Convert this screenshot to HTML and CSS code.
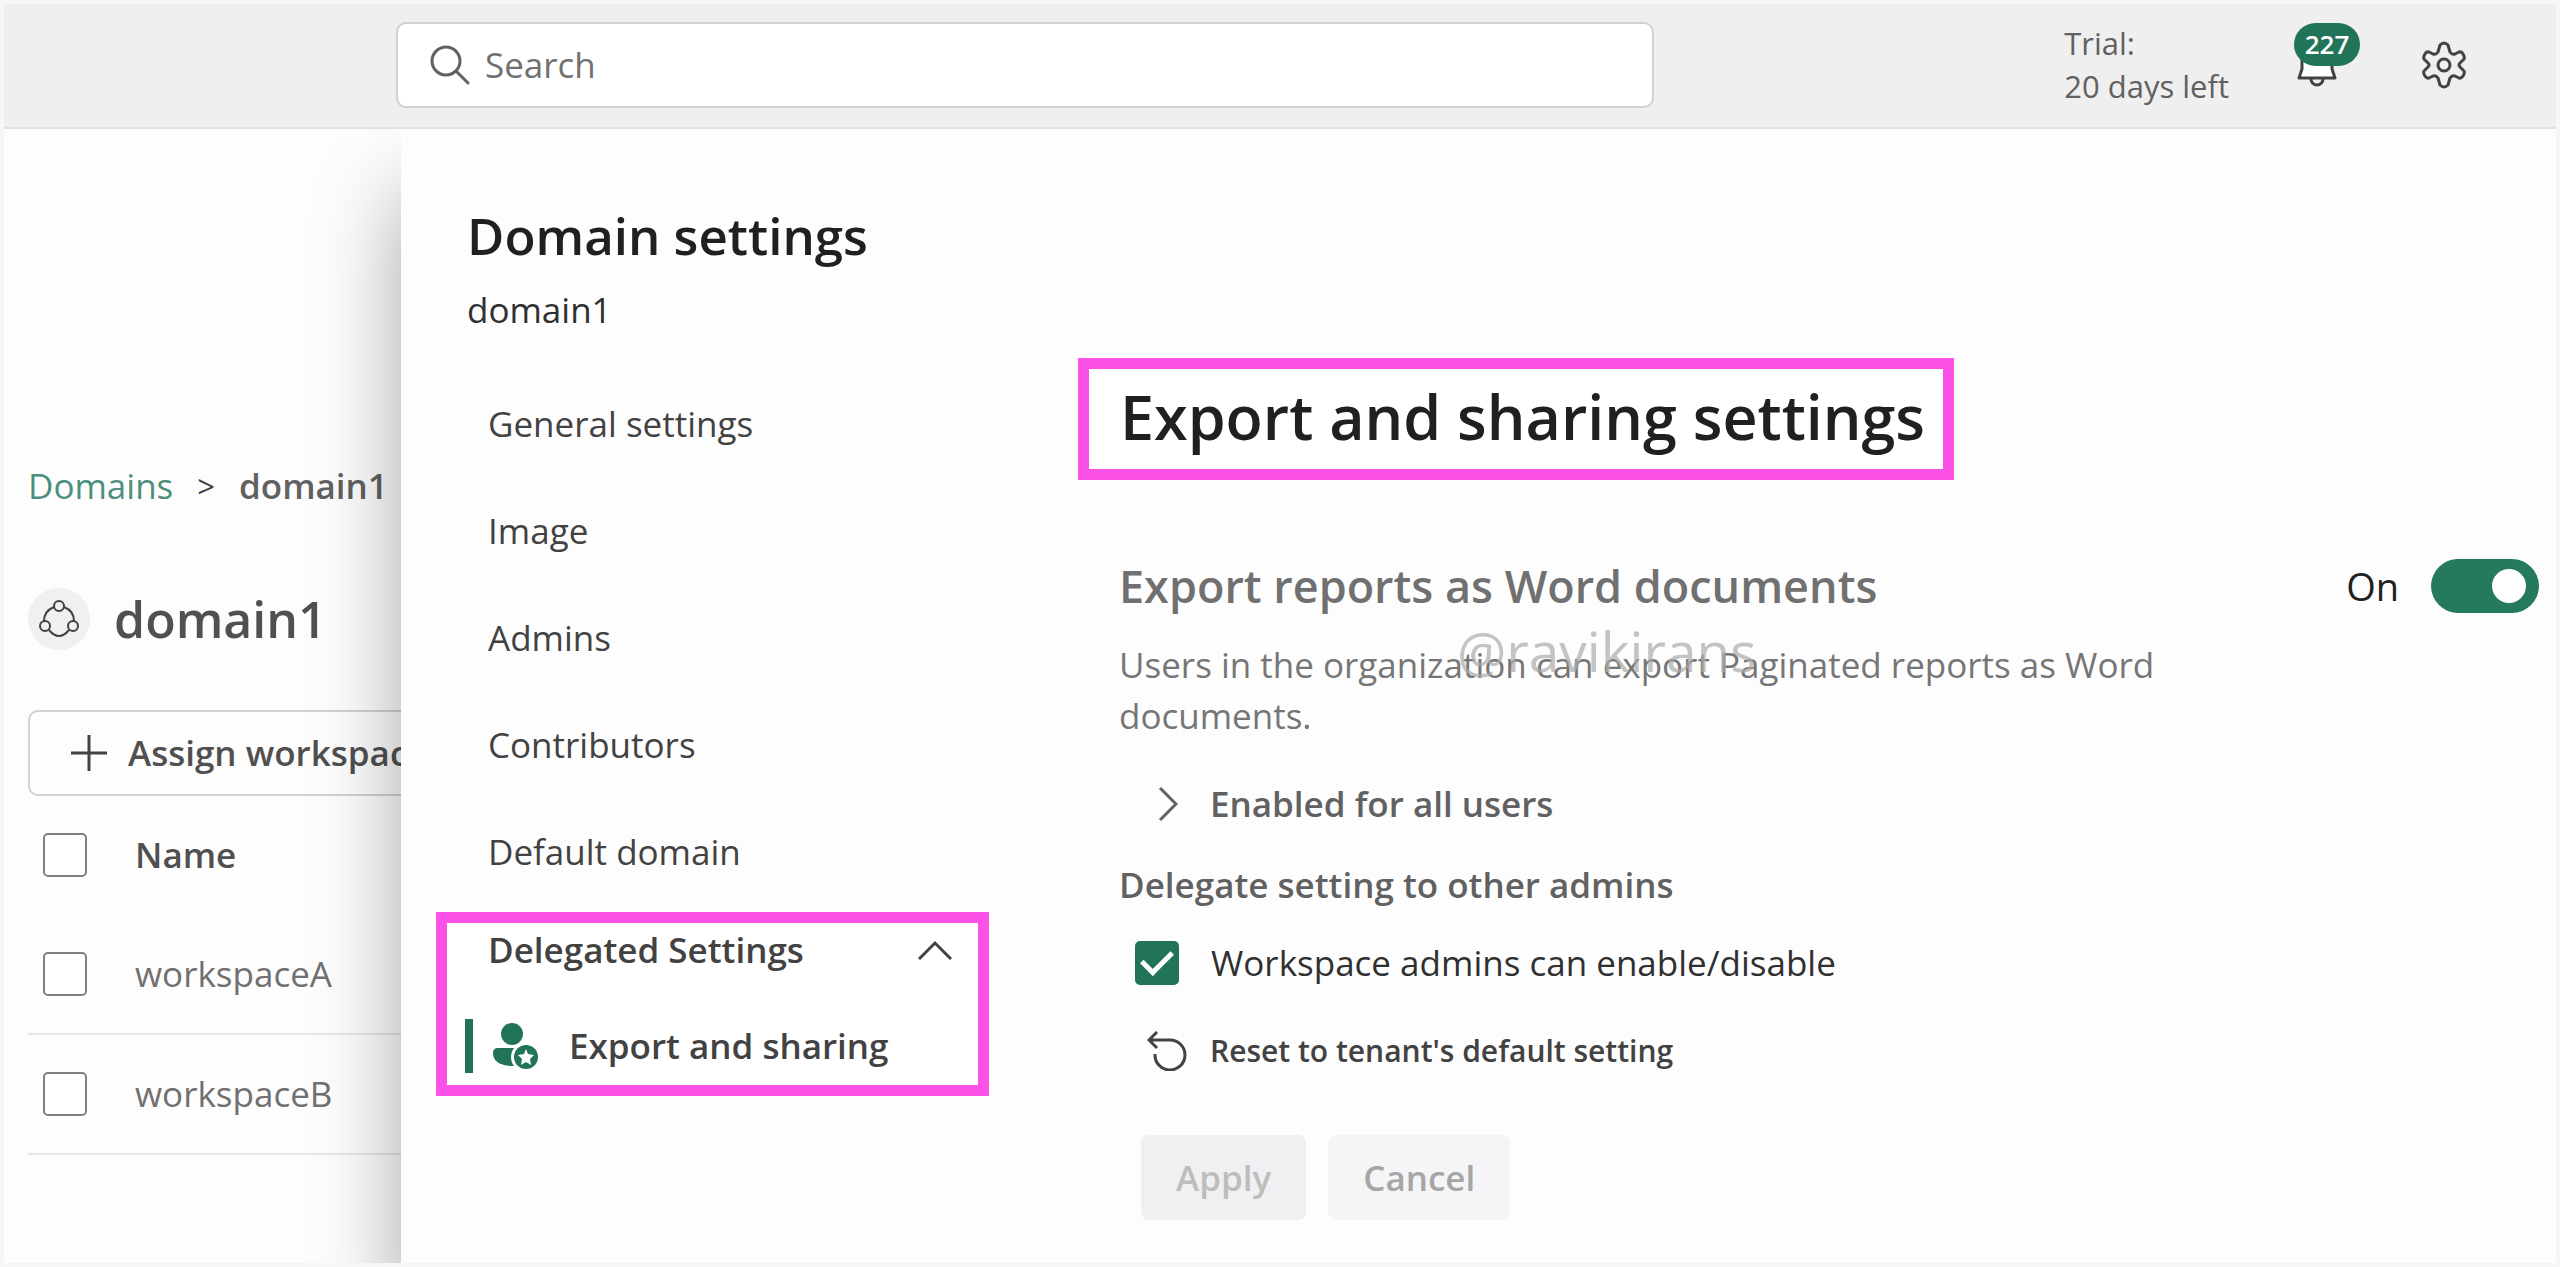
FILE: index.html
```
<!DOCTYPE html>
<html lang="en">
  <head>
    <meta charset="utf-8" />
    <title>Domain settings</title>
    <link rel="stylesheet" href="styles.css">
  </head>
  <body>
    <header class="topbar">
      <label class="search">
        <svg width="40" height="40" viewBox="0 0 40 40" fill="none" stroke="#616161" stroke-width="3" stroke-linecap="round">
          <circle cx="16" cy="16" r="14" />
          <path d="M26 26l12 12" />
        </svg>
        <input type="text" placeholder="Search" aria-label="Search" />
      </label>
      <div class="trial">Trial:<br />20 days left</div>
      <button class="icon-btn bell" aria-label="Notifications">
        <svg width="40" height="44" viewBox="0 0 40 44" fill="none" stroke="#424242" stroke-width="3" stroke-linejoin="round">
          <path class="bell-fill" d="M5 18a15 15 0 0 1 30 0v8l3 9H2l3-9z" />
          <path d="M14 36a6 6 0 0 0 12 0" />
        </svg>
        <span class="badge">227</span>
      </button>
      <button class="icon-btn gear" aria-label="Settings">
        <svg width="46" height="48" viewBox="-1 0 46 48" fill="none" stroke="#424242" stroke-width="3" stroke-linejoin="round">
          <path d="M18 4q4-4 8 0l2 7q2 3 5 2l4-2q3-1 5 4q1 3-1 4l-3 3q-2 2 0 4l3 3q2 1 1 4q-2 5-5 4l-4-2q-3-1-5 2l-2 7q-4 4-8 0l-2-7q-2-3-5-2l-4 2q-3 1-5-4q-1-3 1-4l3-3q2-2 0-4l-3-3q-2-1-1-4q2-5 5-4l4 2q3 1 5-2z" />
          <circle cx="22" cy="24" r="6" />
        </svg>
      </button>
    </header>

    <div class="page">
      <main class="domain">
        <nav class="breadcrumb">
          <a href="#">Domains</a>
          <span class="sep">&gt;</span>
          <b>domain1</b>
        </nav>
        <h1>
          <span class="domain-icon">
            <svg width="40" height="40" viewBox="0 0 40 40" fill="none" stroke="#424242" stroke-width="2">
              <circle cx="20" cy="7" r="5" />
              <circle cx="6" cy="27" r="5" />
              <circle cx="34" cy="27" r="5" />
              <path d="M15 8Q5 12 5 22M25 8q10 4 10 14M10 31q10 12 20 0" />
            </svg>
          </span>
          domain1
        </h1>
        <button class="assign">
          <svg width="38" height="38" viewBox="0 0 38 38" stroke="#424242" stroke-width="3">
            <path d="M19 1v36M1 19h36" />
          </svg>
          Assign workspaces
        </button>
        <table>
          <thead>
            <tr>
              <th><input type="checkbox" class="check" aria-label="Select all" /></th>
              <th>Name</th>
            </tr>
          </thead>
          <tbody>
            <tr>
              <td><input type="checkbox" class="check" id="wsA" /></td>
              <td><label for="wsA">workspaceA</label></td>
            </tr>
            <tr>
              <td><input type="checkbox" class="check" id="wsB" /></td>
              <td><label for="wsB">workspaceB</label></td>
            </tr>
          </tbody>
        </table>
      </main>

      <section class="panel">
        <h2>Domain settings</h2>
        <p class="panel-sub">domain1</p>

        <div class="panel-body">
          <nav class="menu">
            <a href="#">General settings</a>
            <a href="#">Image</a>
            <a href="#">Admins</a>
            <a href="#">Contributors</a>
            <a href="#">Default domain</a>
            <div class="highlight menu-group">
              <button class="group-toggle">
                Delegated Settings
                <svg width="34" height="20" viewBox="0 0 34 20" fill="none" stroke="#424242" stroke-width="3">
                  <path d="M1 19L17 3l16 16" />
                </svg>
              </button>
              <a href="#" class="current">
                <svg width="46" height="46" viewBox="0 0 46 46" fill="#217359">
                  <circle cx="19" cy="11" r="11" />
                  <path d="M5 25h30v18H21Q0 43 0 30q0-5 5-5z" />
                  <circle cx="33" cy="34" r="15" fill="#fff" />
                  <circle cx="33" cy="34" r="12" />
                  <path fill="#fff" d="M33 26l2 5 6 1-4 4 1 6-5-3-5 3 1-6-4-4 6-1z" />
                </svg>
                Export and sharing
              </a>
            </div>
          </nav>

          <div class="content">
            <h3 class="highlight">Export and sharing settings</h3>

            <div class="setting">
              <div class="setting-head">
                <h4>Export reports as Word documents</h4>
                <label for="exportWord">On</label>
                <input type="checkbox" class="switch" id="exportWord" checked />
              </div>
              <div class="desc">
                <p>Users in the organization can export Paginated reports as Word documents.</p>
                <span class="watermark">@ravikirans</span>
              </div>

              <button class="expand">
                <svg width="20" height="34" viewBox="0 0 20 34" fill="none" stroke="#616161" stroke-width="3">
                  <path d="M2 1l16 16L2 33" />
                </svg>
                Enabled for all users
              </button>

              <h5>Delegate setting to other admins</h5>

              <div class="delegate">
                <input type="checkbox" class="check" id="wsAdmins" checked />
                <label for="wsAdmins">Workspace admins can enable/disable</label>
              </div>

              <button class="reset">
                <svg width="40" height="40" viewBox="0 0 40 40" fill="none" stroke="#424242" stroke-width="3">
                  <path d="M10 1L2 9l8 8M2 9h21a15 15 0 1 1-15 14" />
                </svg>
                Reset to tenant's default setting
              </button>

              <div class="actions">
                <button class="apply" disabled>Apply</button>
                <button class="cancel" disabled>Cancel</button>
              </div>
            </div>
          </div>
        </div>
      </section>
    </div>
  </body>
</html>
```
FILE: styles.css
```
* {
  box-sizing: border-box;
}

body {
  margin: 0;
  min-height: 100vh;
  display: flex;
  flex-direction: column;
  border: 4px solid #f6f6f6;
  background: #fefdfe;
  color: #424242;
  font-family: "Open Sans", "Noto Sans", sans-serif;
  font-size: 35px;
  line-height: 48px;
}

h1, h2, h3, h4, h5, p {
  margin: 0;
  font-weight: 600;
}

p {
  font-weight: 400;
}

a {
  color: inherit;
  text-decoration: none;
}

button {
  font: inherit;
  font-weight: 600;
  color: inherit;
  background: none;
  border: 0;
  padding: 0;
}

svg {
  flex: none;
}

/* Top bar */
.topbar {
  display: flex;
  align-items: center;
  height: 125px;
  padding: 0 89px 2px 392px;
  background: #f0eff0;
  border-bottom: 2px solid #e0dfe1;
}

.search {
  display: flex;
  align-items: center;
  gap: 15px;
  flex: 0 1 1258px;
  height: 86px;
  padding: 0 32px;
  background: #fff;
  border: 2px solid #d1d1d1;
  border-radius: 10px;
}

.search input {
  flex: 1;
  border: 0;
  padding: 0;
  outline: 0;
  background: none;
  font: inherit;
}

.search input::placeholder {
  color: #707070;
}

.trial {
  margin-left: auto;
  color: #616161;
  font-size: 31px;
  line-height: 43px;
}

.icon-btn {
  position: relative;
  display: flex;
}

.bell {
  margin-left: 68px;
}

.bell-fill {
  fill: #fff;
}

.badge {
  position: absolute;
  left: -3px;
  bottom: 21px;
  width: 66px;
  border-radius: 22px;
  background: #217359;
  color: #fff;
  font-size: 26px;
  line-height: 43px;
  text-align: center;
}

.gear {
  margin-left: 84px;
}

/* Domain page behind the panel */
.page {
  display: flex;
  flex: 1;
  overflow: hidden;
}

.domain {
  width: 397px;
  flex: none;
  padding: 333px 0 0 24px;
  white-space: nowrap;
}

.breadcrumb {
  display: flex;
  gap: 24px;
}

.breadcrumb a {
  color: #4d8f7d;
}

.breadcrumb b {
  font-weight: 600;
  color: #616161;
}

.sep {
  font-size: 31px;
}

.domain h1 {
  display: flex;
  align-items: center;
  gap: 24px;
  margin: 76px 0 58px;
  font-size: 50px;
  line-height: 66px;
  color: #505050;
}

.domain-icon {
  display: flex;
  align-items: center;
  justify-content: center;
  width: 62px;
  height: 62px;
  border-radius: 50%;
  background: #f0f0f0;
}

.assign {
  display: flex;
  align-items: center;
  gap: 20px;
  height: 86px;
  padding: 0 40px;
  border: 2px solid #d1d1d1;
  border-radius: 10px;
  color: #505050;
}

table {
  width: 100%;
  border-collapse: collapse;
  color: #707070;
}

th,
td {
  height: 120px;
  padding: 0;
  text-align: left;
}

th {
  height: 118px;
  font-weight: 600;
  color: #505050;
}

tbody td {
  border-bottom: 2px solid #e6e4e6;
}

th:first-child,
td:first-child {
  width: 107px;
  padding-left: 15px;
}

/* Tick boxes and the switch */
.check {
  appearance: none;
  display: grid;
  place-items: center;
  flex: none;
  width: 44px;
  height: 44px;
  margin: 0;
  border: 2px solid #808080;
  border-radius: 5px;
  background: #fff;
}

.check:checked {
  border-color: #217359;
  background: #217359;
}

.check:checked::before {
  content: "";
  width: 25px;
  height: 13px;
  margin-bottom: 8px;
  border: solid #fff;
  border-width: 0 0 5px 5px;
  transform: rotate(-45deg);
}

.switch {
  appearance: none;
  display: flex;
  align-items: center;
  justify-content: flex-end;
  width: 108px;
  height: 54px;
  margin: 0;
  padding-right: 13px;
  border-radius: 27px;
  background: #25795f;
}

.switch::before {
  content: "";
  width: 34px;
  height: 34px;
  border-radius: 50%;
  background: #fff;
}

/* Settings panel */
.panel {
  flex: 1;
  min-width: 0;
  padding: 70px 17px 0 35px;
  background: #fefdfe;
  box-shadow: 0 64px 80px rgba(0, 0, 0, 0.34);
}

.panel h2 {
  padding-left: 31px;
  margin-bottom: 15px;
  color: #202020;
  font-size: 51px;
  line-height: 72px;
}

.panel-sub {
  padding-left: 31px;
  color: #303030;
}

.panel-body {
  display: flex;
  gap: 89px;
}

.highlight {
  border: 11px solid #fb51e6;
  background: #fff;
}

.menu {
  flex: 0 0 553px;
  padding-top: 36px;
}

.menu > a {
  display: block;
  padding-left: 52px;
  line-height: 107px;
}

.menu-group {
  margin-top: 7px;
  padding: 0 26px 12px 18px;
}

.group-toggle {
  display: flex;
  align-items: center;
  justify-content: space-between;
  width: 100%;
  height: 54px;
  padding-left: 23px;
}

.current {
  display: flex;
  align-items: center;
  gap: 30px;
  height: 54px;
  margin-top: 42px;
  padding-left: 20px;
  border-left: 8px solid #217359;
  font-weight: 600;
}

.content {
  flex: 1;
  min-width: 0;
  padding-top: 24px;
}

.content h3 {
  width: fit-content;
  padding: 0 18px 4px 31px;
  color: #202020;
  font-size: 61px;
  line-height: 96px;
}

.setting {
  padding: 79px 0 43px 41px;
}

.setting-head {
  display: flex;
  align-items: center;
  gap: 32px;
  color: #202020;
}

.setting-head h4 {
  flex: 1;
  color: #707070;
  font-size: 45px;
  line-height: 54px;
}

.setting-head label {
  font-size: 38px;
}

.desc {
  position: relative;
  max-width: 1100px;
  margin: 26px 0 39px;
  color: #767676;
  line-height: 51px;
}

.watermark {
  position: absolute;
  left: 338px;
  top: -14px;
  color: rgba(170, 170, 170, 0.7);
  font-size: 55px;
}

.expand,
.reset,
.delegate {
  display: flex;
  align-items: center;
}

.expand {
  gap: 32px;
  padding-left: 39px;
  color: #616161;
}

.setting h5 {
  margin: 33px 0 30px;
  color: #616161;
  font-size: 35px;
}

.delegate {
  gap: 32px;
  padding-left: 16px;
  color: #303030;
}

.reset {
  gap: 23px;
  margin-top: 40px;
  padding-left: 28px;
  font-size: 30px;
}

.actions {
  display: flex;
  gap: 22px;
  margin-top: 60px;
  padding-left: 22px;
}

.actions button {
  height: 85px;
  padding: 0 35px;
  border-radius: 8px;
}

.apply {
  background: #f0eff1;
  color: #bdbdbd;
}

.cancel {
  background: #f5f4f6;
  color: #a6a6a6;
}
```
